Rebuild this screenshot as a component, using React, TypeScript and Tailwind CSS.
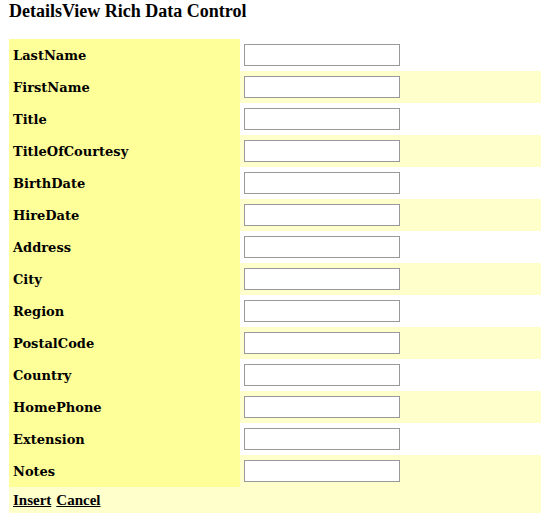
import React from "react";

const fields = [
  "LastName",
  "FirstName",
  "Title",
  "TitleOfCourtesy",
  "BirthDate",
  "HireDate",
  "Address",
  "City",
  "Region",
  "PostalCode",
  "Country",
  "HomePhone",
  "Extension",
  "Notes",
];

export default function App() {
  return (
    <div className="w-[544px] h-[513px] bg-white overflow-hidden pl-[9px] pt-[1px]">
      <h1
        className="text-[18px] font-bold leading-[20px] text-black h-[38px]"
        style={{ fontFamily: '"Liberation Serif", serif' }}
      >
        DetailsView Rich Data Control
      </h1>
      <div
        className="w-[532px] text-[13px] font-bold text-black"
        style={{ fontFamily: '"DejaVu Serif", serif' }}
      >
        {fields.map((f, i) => (
          <div
            key={f}
            className={`flex h-[32px] ${i % 2 === 1 ? "bg-[#ffffcc]" : "bg-white"}`}
          >
            <div className="w-[231px] bg-[#ffff99] flex items-center pl-[4px] pt-[2px]">
              {f}
            </div>
            <div className="flex-1 flex items-center pl-[4px]">
              <input
                type="text"
                className="w-[156px] h-[22px] bg-white border border-[#999999] outline-none"
              />
            </div>
          </div>
        ))}
        <div
          className="h-[26px] bg-[#ffffcc] flex items-start pt-[4px] pl-[4px] gap-[5px] text-[15px] leading-[18px]"
          style={{ fontFamily: '"Liberation Serif", serif' }}
        >
          <a href="#" className="underline text-black">Insert</a>
          <a href="#" className="underline text-black">Cancel</a>
        </div>
      </div>
    </div>
  );
}
